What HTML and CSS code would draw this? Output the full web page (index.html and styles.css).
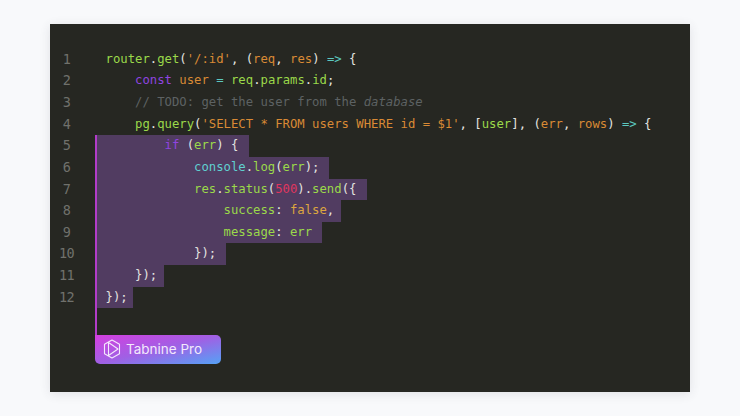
FILE: index.html
```html
<!DOCTYPE html>
<html lang="en">
<head>
<meta charset="utf-8">
<title>Tabnine Pro</title>
<link rel="stylesheet" href="styles.css">
</head>
<body>
<main class="editor">
  <div class="row"><span class="num">1</span><code class="code"><span class="fn">router</span><span class="pl">.</span><span class="fn">get</span><span class="pl">(</span><span class="str">'/:id'</span><span class="pl">, (</span><span class="var">req</span><span class="pl">, </span><span class="var">res</span><span class="pl">) </span><span class="op">=&gt;</span><span class="pl"> {</span></code></div>
  <div class="row"><span class="num">2</span><code class="code">    <span class="kw">const</span> <span class="var">user</span> <span class="op">=</span> <span class="fn">req</span><span class="pl">.</span><span class="fn">params</span><span class="pl">.</span><span class="fn">id</span><span class="pl">;</span></code></div>
  <div class="row"><span class="num">3</span><code class="code">    <span class="cm">// TODO: get the user from the <em class="cm-em">database</em></span></code></div>
  <div class="row"><span class="num">4</span><code class="code">    <span class="fn">pg</span><span class="pl">.</span><span class="fn">query</span><span class="pl">(</span><span class="str">'SELECT * FROM users WHERE id = $1'</span><span class="pl">, [</span><span class="fn">user</span><span class="pl">], (</span><span class="var">err</span><span class="pl">, </span><span class="var">rows</span><span class="pl">) </span><span class="op">=&gt;</span><span class="pl"> {</span></code></div>
  <div class="row"><span class="num">5</span><code class="code hl pad-l">        <span class="kw">if</span><span class="pl"> (</span><span class="fn">err</span><span class="pl">) {</span></code></div>
  <div class="row"><span class="num">6</span><code class="code hl">            <span class="obj">console</span><span class="pl">.</span><span class="fn">log</span><span class="pl">(</span><span class="fn">err</span><span class="pl">);</span></code></div>
  <div class="row"><span class="num">7</span><code class="code hl pad-l">            <span class="fn">res</span><span class="pl">.</span><span class="fn">status</span><span class="pl">(</span><span class="numlit">500</span><span class="pl">).</span><span class="fn">send</span><span class="pl">({</span></code></div>
  <div class="row"><span class="num">8</span><code class="code hl pad-s">                <span class="fn">success</span><span class="pl">: </span><span class="bool">false</span><span class="pl">,</span></code></div>
  <div class="row"><span class="num">9</span><code class="code hl">                <span class="fn">message</span><span class="pl">: </span><span class="fn">err</span></code></div>
  <div class="row"><span class="num">10</span><code class="code hl">            <span class="pl">});</span></code></div>
  <div class="row"><span class="num">11</span><code class="code hl pad-s">    <span class="pl">});</span></code></div>
  <div class="row"><span class="num">12</span><code class="code hl pad-xs"><span class="pl">});</span></code></div>
  <div class="bar"></div>
  <div class="badge">
    <svg class="logo" viewBox="0 0 18 20" fill="none" stroke="currentColor" stroke-width="1.1" stroke-linejoin="round" aria-hidden="true">
      <path d="M9 1 16.500 5.300V14.700L9 19 1.500 14.700V5.300Z"/>
      <path d="M5.500 3.500V16.500L15 10Z"/>
    </svg>
    <span>Tabnine Pro</span>
  </div>
</main>
</body>
</html>
```
FILE: styles.css
```css
html, body { margin: 0; padding: 0; }
body {
  width: 740px;
  height: 416px;
  overflow: hidden;
  background: #f8f9fb;
  padding-top: 24px;
  box-sizing: border-box;
}
.editor {
  box-sizing: border-box;
  width: 640px;
  height: 368px;
  margin-left: 50px;
  padding-top: 24.800px;
  background: #262722;
  box-shadow: 0 2px 10px rgba(60, 60, 70, 0.12);
}
.row {
  display: flex;
  height: 21.640px;
  line-height: 21.640px;
  font-family: "DejaVu Sans Mono", monospace;
  font-size: 12.260px;
}
.num {
  flex: none;
  width: 45px;
  padding-right: 12px;
  box-sizing: border-box;
  text-align: center;
  color: #70716c;
  font-size: 13.500px;
  letter-spacing: -0.600px;
}
.code {
  font: inherit;
  white-space: pre;
  padding-left: 10.500px;
  color: #e4e4e0;
}
.hl {
  padding-left: 8.500px;
  padding-right: 9.500px;
  border-left: 2px solid #b23cc8;
  background: #513c61;
}
.pad-l { padding-right: 10.500px; }
.pad-s { padding-right: 6.500px; }
.pad-xs { padding-right: 5.500px; }
.pl { color: #e4e4e0; }
.fn { color: #9bd94a; }
.str, .var { color: #d98a35; }
.op { color: #5cc8c0; }
.kw { color: #9044e0; }
.cm { color: #5d6263; }
.cm-em { font-style: italic; }
.obj { color: #60d0d0; }
.numlit { color: #e0365f; }
.bool { color: #dda63f; }
.bar {
  height: 26.700px;
  margin-left: 45px;
  border-left: 2px solid #b23cc8;
}
.badge {
  display: flex;
  align-items: center;
  gap: 5px;
  box-sizing: border-box;
  width: 126px;
  height: 29px;
  margin-left: 45px;
  padding-left: 8px;
  border-radius: 0 5px 5px 5px;
  background: linear-gradient(to bottom right, #d43fe0 0%, #a060e4 50%, #55a2f6 100%);
  color: #f3e8fc;
  font-family: Inter, sans-serif;
  font-size: 13.500px;
}
.logo { flex: none; width: 18px; height: 20px; }
```
